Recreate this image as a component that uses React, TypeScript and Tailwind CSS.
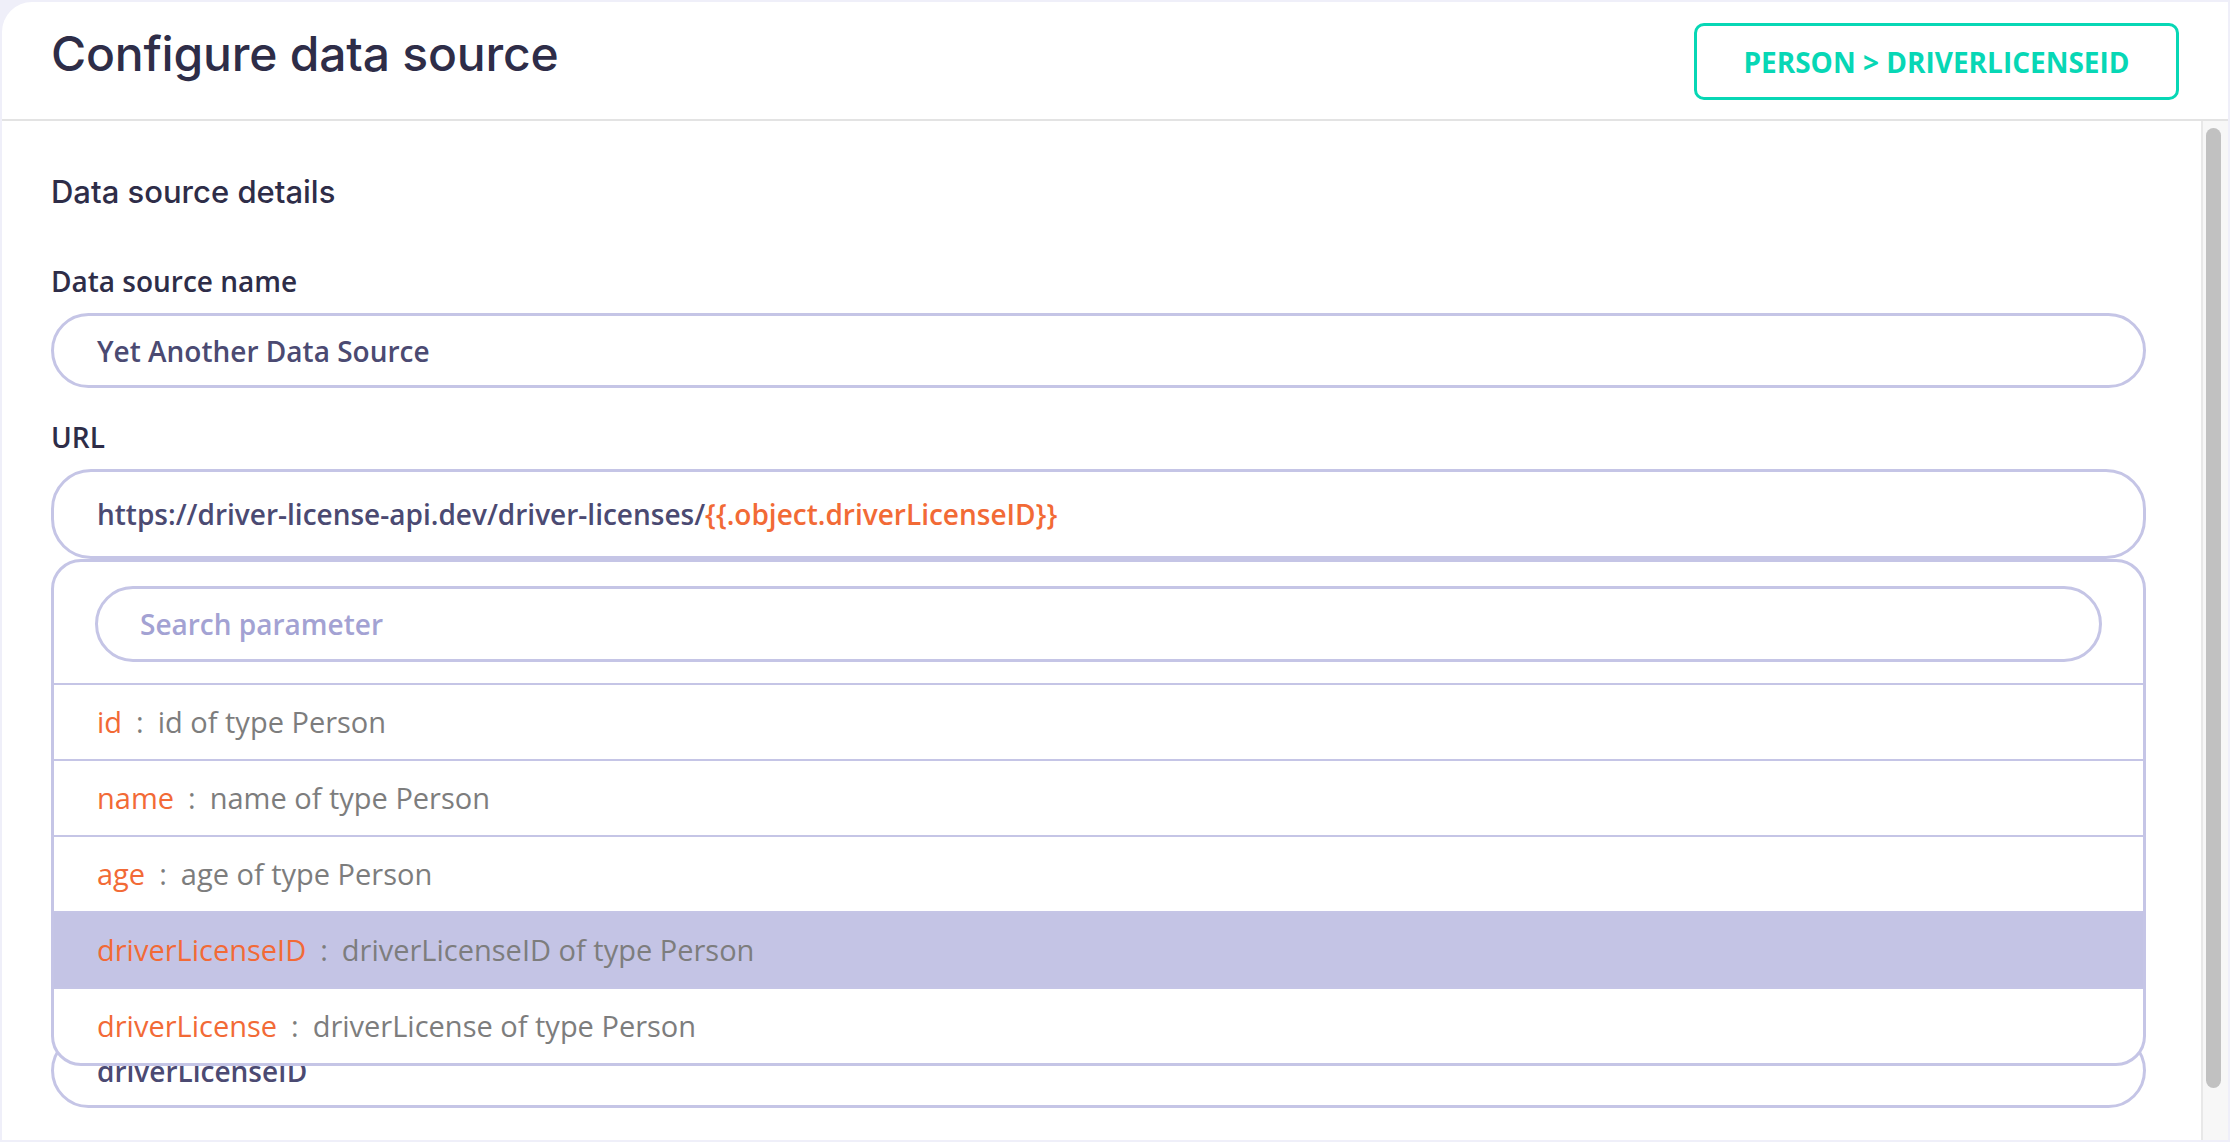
import React from 'react'

const params = [
  { key: 'id', desc: 'id of type Person' },
  { key: 'name', desc: 'name of type Person' },
  { key: 'age', desc: 'age of type Person' },
  { key: 'driverLicenseID', desc: 'driverLicenseID of type Person', active: true },
  { key: 'driverLicense', desc: 'driverLicense of type Person' },
]

const body = { fontFamily: '"Open Sans", "Noto Sans", sans-serif' }
const heading = { fontFamily: 'Inter, "Noto Sans", sans-serif' }

const FieldLabel: React.FC<{ children: React.ReactNode }> = ({ children }) => (
  <label className="block text-[28px] leading-[38px] font-[560] text-[#2e2d48]" style={body}>
    {children}
  </label>
)

export default function App() {
  return (
    <div className="w-[2230px] h-[1142px] bg-[#efeff9] p-[2px] overflow-hidden">
      <div className="h-full bg-white rounded-tl-[30px] flex flex-col overflow-hidden">
        {/* Header */}
        <header className="h-[119px] shrink-0 flex items-start justify-between pl-[49px] pr-[49px] border-b-2 border-[#e3e3e3]">
          <h1 className="mt-[28px] text-[48px] leading-none font-medium text-[#2e2d48] tracking-[-0.2px]" style={heading}>
            Configure data source
          </h1>
          <div
            className="mt-[21px] w-[485px] h-[77px] flex items-center justify-center rounded-[10px] border-[3px] border-[#07d7b5] text-[28px] font-bold text-[#07d7b5]"
            style={body}
          >
            PERSON &gt; DRIVERLICENSEID
          </div>
        </header>

        {/* Body */}
        <div className="flex-1 flex min-h-0">
          <div className="flex-1 min-w-0 pl-[49px] pr-[55px] pt-[53px]">
            <h2 className="text-[31px] leading-[36px] font-medium text-[#2e2d48] mb-[52px]" style={heading}>
              Data source details
            </h2>

            <div className="flex flex-col gap-[30px]">
              <div>
                <FieldLabel>Data source name</FieldLabel>
                <div className="mt-[13px] h-[75px] rounded-[40px] border-[3px] border-[#c5c5e6] flex items-center pl-[43px]">
                  <span className="text-[28px] font-[560] text-[#4b4a72]" style={body}>
                    Yet Another Data Source
                  </span>
                </div>
              </div>

              <div>
                <FieldLabel>URL</FieldLabel>
                <div className="relative mt-[13px]">
                  <div className="h-[90px] rounded-[40px] border-[3px] border-[#c5c5e6] flex items-center pl-[43px] bg-white">
                    <span className="text-[28px] font-[560] text-[#4b4a72]" style={body}>
                      https://driver-license-api.dev/driver-licenses/
                      <span className="font-semibold text-[#f26a36]">{'{{.object.driverLicenseID}}'}</span>
                    </span>
                  </div>

                  {/* Parameter dropdown */}
                  <div className="absolute left-0 right-0 top-full z-10 bg-white rounded-[30px] border-[3px] border-[#c5c5e6] overflow-hidden" style={body}>
                    <div className="px-[41px] pt-[24px] pb-[21px]">
                      <div className="h-[76px] rounded-full border-[3px] border-[#c5c5e6] flex items-center pl-[42px]">
                        <span className="text-[28px] font-[560] text-[#a3a2d3]">Search parameter</span>
                      </div>
                    </div>
                    {params.map((p) => (
                      <div
                        key={p.key}
                        className={`h-[76px] border-t-2 border-[#c5c5e6] flex items-center pl-[43px] text-[29px] font-medium ${
                          p.active ? 'bg-[#c4c4e5]' : ''
                        }`}
                      >
                        <span className="text-[#f26a36]">{p.key}</span>
                        <span className="mx-[14px] text-[#7d7d7d]">:</span>
                        <span className="text-[#7d7d7d]">{p.desc}</span>
                      </div>
                    ))}
                  </div>
                </div>
              </div>

              <div className="mt-[393px]">
                <FieldLabel>Driver license ID</FieldLabel>
                <div className="mt-[13px] h-[75px] rounded-[40px] border-[3px] border-[#c5c5e6] flex items-center pl-[43px]">
                  <span className="text-[28px] font-[560] text-[#4b4a72]" style={body}>
                    driverLicenseID
                  </span>
                </div>
              </div>
            </div>
          </div>

          {/* Scrollbar */}
          <div className="w-[27px] shrink-0 bg-[#f7f7f7] border-l-2 border-[#e8e8e8] pl-[3px] pt-[7px]">
            <div className="w-[15px] h-[960px] rounded-full bg-[#c1c1c1]" />
          </div>
        </div>
      </div>
    </div>
  )
}
